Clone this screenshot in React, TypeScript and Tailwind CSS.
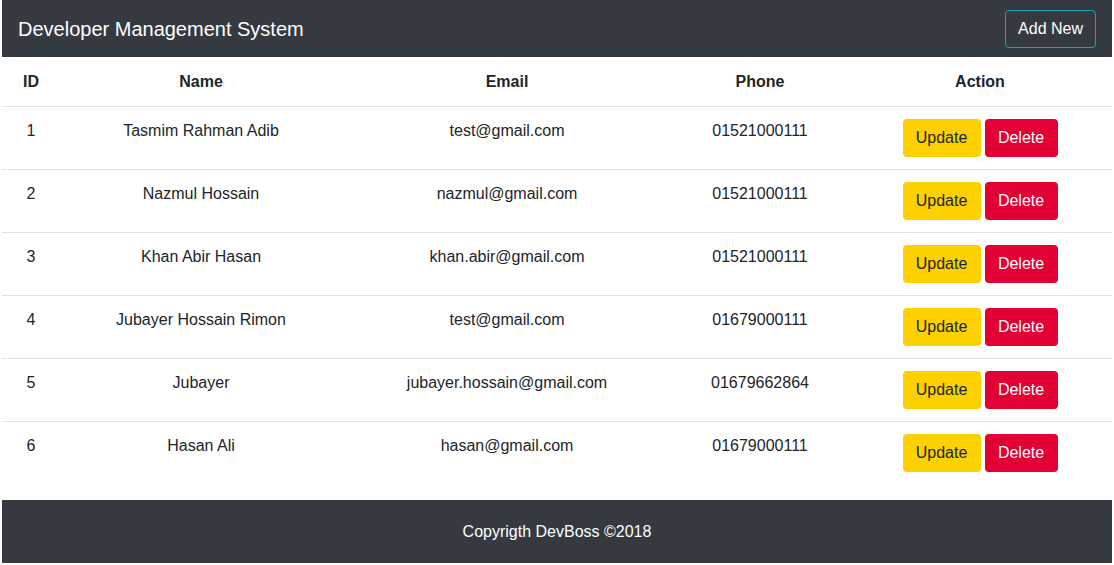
import React from "react";

const rows = [
  { id: 1, name: "Tasmim Rahman Adib", email: "test@gmail.com", phone: "01521000111" },
  { id: 2, name: "Nazmul Hossain", email: "nazmul@gmail.com", phone: "01521000111" },
  { id: 3, name: "Khan Abir Hasan", email: "khan.abir@gmail.com", phone: "01521000111" },
  { id: 4, name: "Jubayer Hossain Rimon", email: "test@gmail.com", phone: "01679000111" },
  { id: 5, name: "Jubayer", email: "jubayer.hossain@gmail.com", phone: "01679662864" },
  { id: 6, name: "Hasan Ali", email: "hasan@gmail.com", phone: "01679000111" },
];

export default function App() {
  return (
    <div
      className="px-[2px] bg-white text-[#212529] text-[16px] leading-6"
      style={{ fontFamily: '"Liberation Sans", Arial, sans-serif' }}
    >
      <nav className="h-[57px] bg-[#343a40] flex items-center justify-between px-4">
        <span className="text-[20px] leading-[30px] text-white">Developer Management System</span>
        <button className="h-[38px] px-3 border border-[#17a2b8] rounded-[4px] text-white">Add New</button>
      </nav>
      <table className="w-full table-fixed border-collapse mb-4">
        <thead>
          <tr className="border-b border-[#dee2e6]">
            <th className="w-[58px] px-3 pt-[13px] pb-3 font-bold text-center">ID</th>
            <th className="w-[282px] px-3 pt-[13px] pb-3 font-bold text-center">Name</th>
            <th className="w-[330px] px-3 pt-[13px] pb-3 font-bold text-center">Email</th>
            <th className="w-[176px] px-3 pt-[13px] pb-3 font-bold text-center">Phone</th>
            <th className="px-3 pt-[13px] pb-3 font-bold text-center">Action</th>
          </tr>
        </thead>
        <tbody>
          {rows.map((r, i) => (
            <tr key={r.id} className={i < rows.length - 1 ? "border-b border-[#dee2e6]" : ""}>
              <td className="p-3 text-center align-top">{r.id}</td>
              <td className="p-3 text-center align-top">{r.name}</td>
              <td className="p-3 text-center align-top">{r.email}</td>
              <td className="p-3 text-center align-top">{r.phone}</td>
              <td className="p-3 text-center align-top">
                <div className="flex justify-center gap-1">
                  <button className="h-[38px] w-[78px] rounded-[4px] bg-[#fdd000] text-[#212529]">Update</button>
                  <button className="h-[38px] w-[73px] rounded-[4px] bg-[#e20034] text-white">Delete</button>
                </div>
              </td>
            </tr>
          ))}
        </tbody>
      </table>
      <footer className="h-[63px] bg-[#343a40] flex items-center justify-center text-white">
        Copyrigth DevBoss ©2018
      </footer>
    </div>
  );
}
